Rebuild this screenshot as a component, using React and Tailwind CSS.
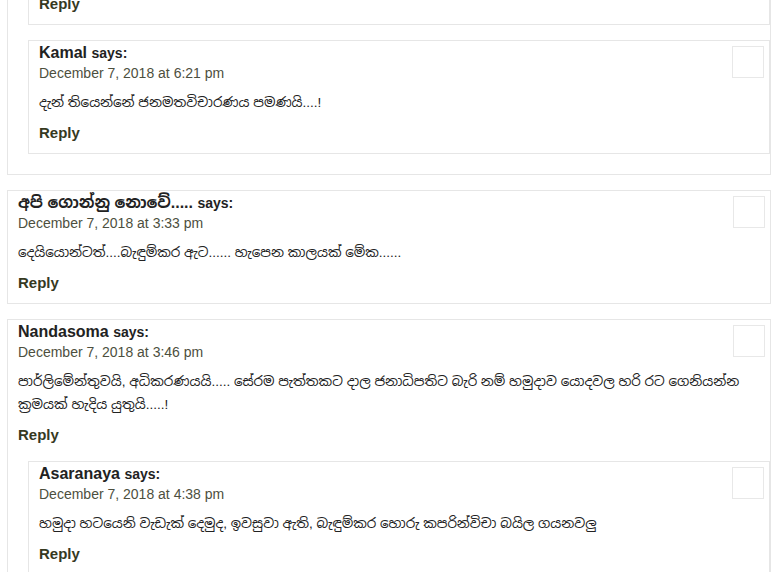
const sans = { fontFamily: '"Liberation Sans", Arial, "Noto Sans Sinhala", sans-serif' };

const threads = [
  {
    id: 'c1',
    cut: true,
    replies: [
      { id: 'c1-r1', cut: true },
      {
        id: 'c1-r2',
        name: 'Kamal',
        date: 'December 7, 2018 at 6:21 pm',
        lines: ['දැන් තියෙන්නේ ජනමතවිචාරණය පමණයි....!'],
      },
    ],
  },
  {
    id: 'c2',
    name: 'අපි ගොන්නු නොවේ.....',
    date: 'December 7, 2018 at 3:33 pm',
    lines: ['දෙයියොන්ටත්....බැඳුම්කර ඇට...... හැපෙන කාලයක් මේක......'],
    replies: [],
  },
  {
    id: 'c3',
    name: 'Nandasoma',
    date: 'December 7, 2018 at 3:46 pm',
    lines: [
      'පාර්ලිමේන්තුවයි, අධිකරණයයි..... සේරම පැත්තකට දාල ජනාධිපතිට බැරි නම් හමුදාව යොදවල හරි රට ගෙනියන්න',
      'ක්‍රමයක් හැදිය යුතුයි.....!',
    ],
    replies: [
      {
        id: 'c3-r1',
        name: 'Asaranaya',
        date: 'December 7, 2018 at 4:38 pm',
        lines: ['හමුදා හටයෙනි වැඩැක් දෙමුද, ඉවසුවා ඇති, බැඳුම්කර හොරු කපරින්විචා බයිල ගයනවලු'],
      },
    ],
  },
];

function ReplyLink({ className = '' }) {
  return (
    <div className={`text-[15px] leading-[20px] font-bold text-[#36391f] ${className}`}>
      <a href="#">Reply</a>
    </div>
  );
}

function Article({ c }) {
  if (c.cut) {
    return (
      <div className="pl-[10px] pb-[10px]">
        <ReplyLink className="-mt-[6px]" />
      </div>
    );
  }
  return (
    <div className="pl-[10px] pr-[5px] pt-[2px] pb-[10px]">
      <div className="flex items-start justify-between">
        <div>
          <div className="text-[16px] leading-[20px] font-bold text-[#222]">
            {c.name} <span className="text-[14px]">says:</span>
          </div>
          <div className="text-[14px] leading-[20px] text-[#4d4f3e]">{c.date}</div>
        </div>
        <div className="mt-[3px] w-8 h-8 border border-[#e8e8e8] bg-white shrink-0" />
      </div>
      <div className="mt-[8px] text-[13.5px] leading-[23px] text-[#222]">
        {c.lines.map((l, i) => (
          <div key={i} className="whitespace-nowrap">{l}</div>
        ))}
      </div>
      <ReplyLink className="mt-[9px]" />
    </div>
  );
}

export default function App() {
  return (
    <div className="h-[572px] w-[779px] overflow-hidden bg-white" style={sans}>
      <div className="flex flex-col gap-[15px] pl-[7px] w-[771px]">
        {threads.map((t) => (
          <div
            key={t.id}
            className={`border-x border-b border-[#e6e6e6] ${t.cut ? '' : 'border-t'}`}
          >
            {!t.cut && <Article c={t} />}
            {t.replies.length > 0 && (
              <div className={`ml-[20px] mb-[20px] flex flex-col gap-[15px] ${t.cut ? '' : 'mt-[6px]'}`}>
                {t.replies.map((r) => (
                  <div
                    key={r.id}
                    className={`border-x border-b border-[#e6e6e6] ${r.cut ? '' : 'border-t'}`}
                  >
                    <Article c={r} />
                  </div>
                ))}
              </div>
            )}
          </div>
        ))}
      </div>
    </div>
  );
}
